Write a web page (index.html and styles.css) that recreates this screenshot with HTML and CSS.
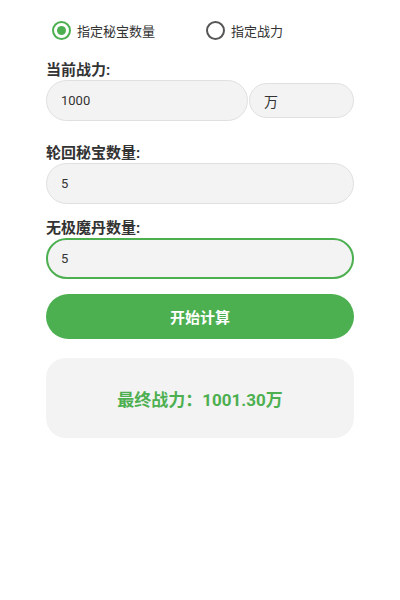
FILE: index.html
```html
<!DOCTYPE html>
<html lang="zh">
<head>
  <meta charset="UTF-8" />
  <title>战力计算</title>
  <meta name="viewport" content="width=device-width, initial-scale=1.0" />
  <link rel="stylesheet" href="styles.css">
</head>
<body>
  <div class="page">
    <div class="mode-row">
      <label class="radio checked"><span class="dot"></span>指定秘宝数量</label>
      <label class="radio"><span class="dot"></span>指定战力</label>
    </div>

    <div class="label">当前战力:</div>
    <div class="power-row">
      <div class="field power-input">1000</div>
      <div class="field unit">万</div>
    </div>

    <div class="label gap">轮回秘宝数量:</div>
    <div class="field">5</div>

    <div class="label tight">无极魔丹数量:</div>
    <div class="field focused">5</div>

    <button class="calc">开始计算</button>

    <div class="result">最终战力：1001.30万</div>
  </div>
</body>
</html>
```

FILE: styles.css
```css
body {
  margin: 0;
  font-family: Roboto, "Noto Sans CJK SC", sans-serif;
  background: #fff;
  color: #333;
}

.page {
  padding: 20px 46px;
  display: flex;
  flex-direction: column;
}

.mode-row {
  display: flex;
  height: 20px;
  align-items: center;
}

.radio {
  display: flex;
  align-items: center;
  font-size: 13px;
  color: #333;
  width: 160px;
  padding-left: 6px;
}

.radio .dot {
  width: 15px;
  height: 15px;
  border: 2px solid #555;
  border-radius: 50%;
  margin-right: 6px;
  position: relative;
}

.radio.checked .dot {
  border-color: #4caf50;
}

.radio.checked .dot::after {
  content: "";
  position: absolute;
  left: 3px;
  top: 3px;
  width: 9px;
  height: 9px;
  border-radius: 50%;
  background: #4caf50;
}

.label {
  font-size: 15px;
  font-weight: bold;
  margin-top: 21px;
  line-height: 18px;
  margin-bottom: 1px;
}

.label.gap {
  margin-top: 23px;
}

.label.tight {
  margin-top: 15px;
}

.power-row {
  display: flex;
  align-items: center;
  gap: 1px;
}

.field {
  box-sizing: border-box;
  height: 41px;
  border: 1px solid #e0e0e0;
  background: #f3f3f3;
  border-radius: 21px;
  padding: 0 14px;
  font-size: 13px;
  display: flex;
  align-items: center;
}

.power-input {
  width: 202px;
}

.unit {
  flex: 1;
  height: 35px;
  font-size: 14px;
}

.field.focused {
  border: 2px solid #4caf50;
  padding-left: 13px;
}

.calc {
  margin-top: 15px;
  height: 45px;
  border: none;
  border-radius: 23px;
  background: #4caf50;
  color: white;
  font-family: inherit;
  font-size: 15px;
  font-weight: bold;
}

.result {
  margin-top: 19px;
  height: 80px;
  background: #f3f3f3;
  border-radius: 20px;
  display: flex;
  align-items: center;
  justify-content: center;
  color: #4caf50;
  font-size: 17px;
  font-weight: bold;
}
```
